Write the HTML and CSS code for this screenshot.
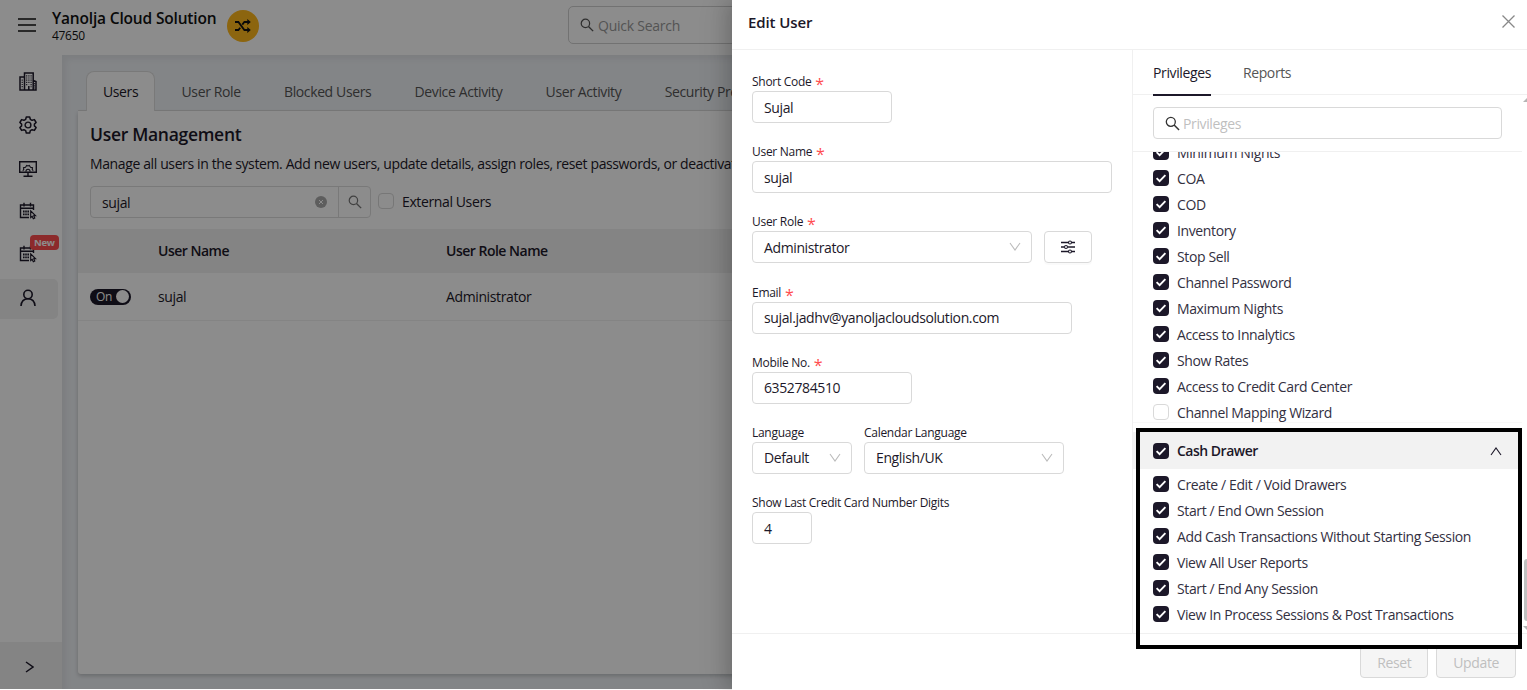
FILE: index.html
```html
<!DOCTYPE html>
<html lang="en">
<head>
    <meta charset="UTF-8">
    <meta name="viewport" content="width=device-width, initial-scale=1.0">
    <title>Yanolja Cloud Solution - Edit User</title>
    <link rel="stylesheet" href="styles.css">
</head>
<body>
    <svg class="sprite" width="0" height="0">
        <symbol id="search" viewBox="0 0 16 16">
            <circle cx="6.2" cy="6.2" r="4.8" fill="none" stroke="currentColor" stroke-width="1.4"/>
            <path d="M9.7 9.7l5.3 5.3" fill="none" stroke="currentColor" stroke-width="1.6"/>
        </symbol>
        <symbol id="tick" viewBox="0 0 16 16">
            <path d="M3.6 8.2l3 3 5.8-6" fill="none" stroke="currentColor" stroke-width="1.9"/>
        </symbol>
        <symbol id="down" viewBox="0 0 12 12">
            <path d="M1 2l5 7 5-7" fill="none" stroke="currentColor" stroke-width="1.1"/>
        </symbol>
        <symbol id="calendar" viewBox="0 0 18 18">
            <path d="M10 15.500H1.500V3h13v5M1.500 6.300h13M5 .8v3.700M11.500 .8v3.700" fill="none" stroke="currentColor" stroke-width="1.400"/>
            <path d="M4 9.500h6M4 12.400h6" fill="none" stroke="currentColor" stroke-width="1.800" stroke-dasharray="1.600 .6"/>
            <path d="M11.700 8.800v6.700l1.500-1.200 1.100 2.500 1.500-.7-1.100-2.300h1.900z" fill="none" stroke="currentColor" stroke-width="1.100"/>
        </symbol>
    </svg>

    <div class="app">
        <header class="header">
            <svg class="menu-icon" viewBox="0 0 18 14"><path d="M0 1h18M0 7h18M0 13h18" stroke="currentColor" stroke-width="1.3"/></svg>
            <div class="property">
                <div class="property-name">Yanolja Cloud Solution</div>
                <div class="property-code">47650</div>
            </div>
            <div class="switch-property">
                <svg width="16" height="14" viewBox="0 0 16 14"><path d="M0 3h3.400l6 8H14M0 11h3.400l1.800-2.300M7.300 5.600L9.400 3H14" fill="none" stroke="currentColor" stroke-width="1.800"/><path d="M12.300 0l3.500 3-3.500 3zM12.300 8l3.500 3-3.500 3z" fill="currentColor"/></svg>
            </div>
            <div class="quick-search">
                <svg width="14" height="14"><use href="#search"/></svg>
                <span>Quick Search</span>
            </div>
        </header>

        <div class="main">
            <nav class="sidebar">
                <a class="nav-item">
                    <svg width="18" height="19" viewBox="0 0 18 19"><path d="M5.500 18V1h8.700v17M5.500 5H1v13h16V9.500l-2.800-1M9.800 18v-4" fill="none" stroke="currentColor" stroke-width="1.500"/><path d="M7.700 3.200v10M9.900 3.200v9M12.100 3.200v12M3.200 7.500v9M15.700 11v6" fill="none" stroke="currentColor" stroke-width="1.100" stroke-dasharray="1.200 1"/></svg>
                </a>
                <a class="nav-item">
                    <svg width="18" height="18" viewBox="0 0 18 18"><path d="M7.300 1h3.400l.6 2.300 1.800 1 2.300-.7 1.700 2.900-1.700 1.600v1.800l1.700 1.600-1.700 2.900-2.300-.7-1.800 1-.6 2.300H7.300l-.6-2.300-1.800-1-2.300.7-1.700-2.900 1.700-1.600V8.100L.9 6.500l1.700-2.900 2.300.7 1.800-1z" fill="none" stroke="currentColor" stroke-width="1.500" stroke-linejoin="round"/><circle cx="9" cy="9" r="2.900" fill="none" stroke="currentColor" stroke-width="1.400"/></svg>
                </a>
                <a class="nav-item monitor">
                    <svg width="18" height="16" viewBox="0 0 18 16"><path d="M.7.7h16.600v10.600H.7zM9 11.500V15M4.500 15.200h9" fill="none" stroke="currentColor" stroke-width="1.400"/><path d="M3.800 9.800l1-1.500-.3-1.700 2-.4L7.700 4.500 9 5l1.300-.5 1.200 1.700 2 .4-.3 1.700 1 1.500M6.900 10.800c0-3.400 4.200-3.400 4.200 0" fill="none" stroke="currentColor" stroke-width="1.100"/></svg>
                </a>
                <a class="nav-item">
                    <svg width="18" height="18"><use href="#calendar"/></svg>
                </a>
                <a class="nav-item">
                    <svg width="18" height="18"><use href="#calendar"/></svg>
                    <span class="badge">New</span>
                </a>
                <a class="nav-item active">
                    <svg width="16" height="18" viewBox="0 0 16 18"><circle cx="8" cy="5.500" r="4.200" fill="none" stroke="currentColor" stroke-width="1.600"/><path d="M1 17c.3-4.500 3-7.300 7-7.300s6.700 2.800 7 7.300" fill="none" stroke="currentColor" stroke-width="1.600"/></svg>
                </a>
                <div class="expand">
                    <svg width="9" height="12" viewBox="0 0 9 12"><path d="M1 1l7 5-7 5" fill="none" stroke="currentColor" stroke-width="1.500"/></svg>
                </div>
            </nav>

            <div class="content">
                <div class="tabs">
                    <div class="tab current">Users</div>
                    <div class="tab">User Role</div>
                    <div class="tab">Blocked Users</div>
                    <div class="tab">Device Activity</div>
                    <div class="tab">User Activity</div>
                    <div class="tab">Security Preferences</div>
                </div>
                <section class="card">
                    <h1>User Management</h1>
                    <p class="description">Manage all users in the system. Add new users, update details, assign roles, reset passwords, or deactivate users.</p>
                    <div class="filters">
                        <div class="user-search">
                            <span class="user-search-text">sujal</span>
                            <svg class="clear" width="12" height="12" viewBox="0 0 12 12"><circle cx="6" cy="6" r="6" fill="#aaa"/><path d="M4 4l4 4M8 4l-4 4" stroke="#fff"/></svg>
                            <span class="search-button"><svg width="14" height="14"><use href="#search"/></svg></span>
                        </div>
                        <span class="checkbox"></span>
                        <span class="filter-label">External Users</span>
                    </div>
                    <div class="row row-head">
                        <div></div>
                        <div>User Name</div>
                        <div>User Role Name</div>
                    </div>
                    <div class="row">
                        <div><span class="switch">On<i></i></span></div>
                        <div>sujal</div>
                        <div>Administrator</div>
                    </div>
                </section>
            </div>
        </div>
    </div>

    <div class="mask"></div>

    <aside class="drawer">
        <div class="drawer-header">
            <h2>Edit User</h2>
            <svg class="close" width="13" height="13" viewBox="0 0 13 13"><path d="M.5.5l12 12M12.500.5l-12 12" stroke="currentColor" stroke-width="1.300"/></svg>
        </div>

        <div class="drawer-body">
            <form class="form">
                <div class="field">
                    <label>Short Code <b>*</b></label>
                    <div class="input w-140">Sujal</div>
                </div>
                <div class="field">
                    <label>User Name <b>*</b></label>
                    <div class="input w-360">sujal</div>
                </div>
                <div class="field">
                    <label>User Role <b>*</b></label>
                    <div class="field-row">
                        <div class="input w-280">Administrator<svg width="12" height="12"><use href="#down"/></svg></div>
                        <div class="settings">
                            <svg width="14" height="14" viewBox="0 0 14 14"><path d="M0 2.500h7.300M10.700 2.500H14M0 7h3.300M6.700 7H14M0 11.500h7.300M10.700 11.500H14" stroke="currentColor" stroke-width="1.300"/><g fill="none" stroke="currentColor" stroke-width="1.100"><circle cx="9" cy="2.500" r="1.500"/><circle cx="5" cy="7" r="1.500"/><circle cx="9" cy="11.500" r="1.500"/></g></svg>
                        </div>
                    </div>
                </div>
                <div class="field">
                    <label>Email <b>*</b></label>
                    <div class="input w-320">sujal.jadhv@yanoljacloudsolution.com</div>
                </div>
                <div class="field">
                    <label>Mobile No. <b>*</b></label>
                    <div class="input w-160">6352784510</div>
                </div>
                <div class="field-row">
                    <div class="field">
                        <label>Language</label>
                        <div class="input w-100">Default<svg width="12" height="12"><use href="#down"/></svg></div>
                    </div>
                    <div class="field">
                        <label>Calendar Language</label>
                        <div class="input w-200">English/UK<svg width="12" height="12"><use href="#down"/></svg></div>
                    </div>
                </div>
                <div class="field">
                    <label>Show Last Credit Card Number Digits</label>
                    <div class="input w-60">4</div>
                </div>
            </form>

            <div class="privileges">
                <div class="sub-tabs">
                    <div class="sub-tab current">Privileges</div>
                    <div class="sub-tab">Reports</div>
                </div>
                <div class="privilege-search">
                    <div class="input">
                        <svg width="15" height="15"><use href="#search"/></svg>
                        <span>Privileges</span>
                    </div>
                </div>
                <div class="privilege-list">
                    <ul class="checks scrolled">
                        <li><span class="checkbox on"><svg><use href="#tick"/></svg></span>Minimum Nights</li>
                        <li><span class="checkbox on"><svg><use href="#tick"/></svg></span>COA</li>
                        <li><span class="checkbox on"><svg><use href="#tick"/></svg></span>COD</li>
                        <li><span class="checkbox on"><svg><use href="#tick"/></svg></span>Inventory</li>
                        <li><span class="checkbox on"><svg><use href="#tick"/></svg></span>Stop Sell</li>
                        <li><span class="checkbox on"><svg><use href="#tick"/></svg></span>Channel Password</li>
                        <li><span class="checkbox on"><svg><use href="#tick"/></svg></span>Maximum Nights</li>
                        <li><span class="checkbox on"><svg><use href="#tick"/></svg></span>Access to Innalytics</li>
                        <li><span class="checkbox on"><svg><use href="#tick"/></svg></span>Show Rates</li>
                        <li><span class="checkbox on"><svg><use href="#tick"/></svg></span>Access to Credit Card Center</li>
                        <li><span class="checkbox"></span>Channel Mapping Wizard</li>
                    </ul>
                    <div class="group-head">
                        <span class="checkbox on"><svg><use href="#tick"/></svg></span>Cash Drawer
                        <svg class="collapse" width="12" height="12"><use href="#down"/></svg>
                    </div>
                    <ul class="checks">
                        <li><span class="checkbox on"><svg><use href="#tick"/></svg></span>Create / Edit / Void Drawers</li>
                        <li><span class="checkbox on"><svg><use href="#tick"/></svg></span>Start / End Own Session</li>
                        <li><span class="checkbox on"><svg><use href="#tick"/></svg></span>Add Cash Transactions Without Starting Session</li>
                        <li><span class="checkbox on"><svg><use href="#tick"/></svg></span>View All User Reports</li>
                        <li><span class="checkbox on"><svg><use href="#tick"/></svg></span>Start / End Any Session</li>
                        <li><span class="checkbox on"><svg><use href="#tick"/></svg></span>View In Process Sessions &amp; Post Transactions</li>
                    </ul>
                </div>
                <div class="scrollbar"></div>
            </div>
        </div>

        <div class="drawer-footer">
            <div class="button">Reset</div>
            <div class="button">Update</div>
        </div>
        <div class="highlight"></div>
    </aside>
</body>
</html>
```
FILE: styles.css
```css
* {
    box-sizing: border-box;
}

body {
    margin: 0;
    height: 690px;
    overflow: hidden;
    position: relative;
    font-family: 'Segoe UI', 'Open Sans', 'Noto Sans', sans-serif;
    font-size: 14px;
    letter-spacing: -0.38px;
    color: #1c1829;
    background: #fff;
}

svg {
    flex: none;
    display: block;
}

.sprite {
    position: absolute;
}

.app {
    height: 689px;
    overflow: hidden;
}

.header {
    height: 55px;
    display: flex;
    align-items: flex-start;
    padding-left: 18px;
    background: #fff;
    color: #111;
}

.menu-icon {
    width: 18px;
    height: 14px;
    margin-top: 18px;
}

.property {
    width: 175px;
    margin-left: 16px;
    padding-top: 8px;
    white-space: nowrap;
}

.property-name {
    font-size: 15.5px;
    line-height: 21px;
    font-weight: 600;
    letter-spacing: -0.17px;
}

.property-code {
    font-size: 12px;
    line-height: 14px;
    letter-spacing: -0.3px;
}

.switch-property {
    width: 32px;
    height: 32px;
    margin-top: 10px;
    border-radius: 50%;
    display: flex;
    align-items: center;
    justify-content: center;
    background: #ffb81c;
}

.quick-search {
    width: 400px;
    height: 38px;
    margin: 6px 0 0 309px;
    border: 1px solid #d0d0d0;
    border-radius: 5px;
    display: flex;
    align-items: center;
    gap: 4px;
    padding-left: 11px;
    color: #999;
    letter-spacing: -0.25px;
}

.quick-search svg {
    color: #555;
}

.main {
    display: flex;
    height: 634px;
}

.sidebar {
    width: 62px;
    display: flex;
    flex-direction: column;
    padding-top: 6px;
    background: #fff;
}

.nav-item {
    position: relative;
    width: 58px;
    height: 40px;
    margin-bottom: 3.5px;
    border-radius: 0 5px 5px 0;
    display: flex;
    align-items: center;
    justify-content: center;
    padding: 0 2px 2px 0;
}

.nav-item:nth-child(-n+2) {
    padding-bottom: 0;
}

.nav-item.monitor {
    padding: 1px 2px 0 0;
}

.nav-item.active {
    background: #f0f0f0;
}

.badge {
    position: absolute;
    left: 30px;
    top: 0;
    height: 15px;
    padding: 0 4px;
    border-radius: 4px;
    background: #ff4d4f;
    color: #fff;
    font-size: 9.5px;
    font-weight: 700;
    line-height: 15px;
    letter-spacing: -0.3px;
}

.expand {
    height: 47px;
    margin-top: auto;
    padding: 2px 0 0 25px;
    display: flex;
    align-items: center;
    background: #f0f0f0;
}

.content {
    flex: 1;
    padding: 16px 0 0 16px;
    background: #eff2f6;
    box-shadow: inset 4px 4px 6px rgba(0, 0, 0, 0.06);
}

.tabs {
    height: 40px;
    display: flex;
    padding-left: 8px;
    border-bottom: 1px solid #ddd;
    white-space: nowrap;
}

.tab {
    height: 40px;
    padding: 0 16px;
    margin-right: 9.3px;
    border: 1px solid transparent;
    line-height: 40px;
    color: #555;
}

.tab.current {
    border-color: #ddd;
    border-bottom: 0;
    border-radius: 8px 8px 0 0;
    background: #fff;
    color: #1c1829;
}

.card {
    height: 563px;
    background: #fff;
    border-radius: 0 0 0 3px;
    box-shadow: 0 2px 4px rgba(0, 0, 0, 0.2);
}

h1 {
    margin: 0;
    padding: 9px 12px 0;
    font-size: 17.5px;
    line-height: 28px;
    font-weight: 600;
    letter-spacing: -0.3px;
}

.description {
    margin: 0;
    padding: 6px 12px 0;
    line-height: 20px;
    white-space: nowrap;
}

.filters {
    display: flex;
    align-items: center;
    height: 32px;
    margin: 12px 12px 11px;
}

.user-search {
    width: 281px;
    height: 32px;
    margin-right: 7px;
    border: 1px solid #ddd;
    border-radius: 4px;
    display: flex;
    align-items: center;
}

.user-search-text {
    flex: 1;
    padding-left: 11px;
}

.clear {
    margin-right: 11px;
}

.search-button {
    width: 32px;
    height: 30px;
    border-left: 1px solid #ddd;
    display: flex;
    align-items: center;
    justify-content: center;
    color: #777;
}

.filter-label {
    margin-left: 8px;
    padding-bottom: 2px;
}

.filters > .checkbox {
    margin-bottom: 2px;
}

.checkbox {
    width: 16px;
    height: 16px;
    flex: none;
    border: 1px solid #d9d9d9;
    border-radius: 4px;
    background: #fff;
}

.checkbox.on {
    border: 0;
    background: #1c1829;
    color: #fff;
}

.checkbox svg {
    width: 16px;
    height: 16px;
}

.row {
    display: grid;
    grid-template-columns: 68px 288px 1fr;
    align-items: center;
    height: 48px;
    padding-left: 12px;
    border-bottom: 1px solid #f0f0f0;
}

.row-head {
    height: 44px;
    background: #f0f0f0;
    font-weight: 600;
    letter-spacing: -0.5px;
}

.switch {
    width: 41px;
    height: 16px;
    padding: 0 2px 0 6px;
    border-radius: 8px;
    display: flex;
    align-items: center;
    justify-content: space-between;
    background: #1c1829;
    color: #fff;
    font-size: 12px;
}

.switch i {
    width: 13px;
    height: 13px;
    border-radius: 50%;
    background: #fff;
}

.mask {
    position: absolute;
    inset: 0 0 1px;
    background: rgba(0, 0, 0, 0.45);
}

.drawer {
    position: absolute;
    top: 0;
    right: 0;
    width: 795px;
    height: 690px;
    display: flex;
    flex-direction: column;
    background: #fff;
    box-shadow: -6px 0 16px rgba(0, 0, 0, 0.14), -9px 0 28px rgba(0, 0, 0, 0.08);
}

.drawer-header {
    height: 50px;
    padding: 0 12px 5px 16px;
    display: flex;
    align-items: center;
    justify-content: space-between;
    border-bottom: 1px solid #f0f0f0;
}

h2 {
    margin: 0;
    font-size: 15px;
    font-weight: 600;
    letter-spacing: -0.1px;
}

.close {
    margin-bottom: 2px;
    color: #888;
}

.drawer-body {
    height: 584px;
    display: flex;
    border-bottom: 1px solid #f0f0f0;
}

.form {
    width: 400px;
    padding: 23px 0 0 20px;
}

.field {
    height: 70.2px;
}

.field-row {
    display: flex;
    gap: 12px;
}

label {
    display: block;
    height: 18px;
    font-size: 12px;
    line-height: 18px;
    letter-spacing: -0.28px;
    white-space: nowrap;
}

label b {
    margin-left: 1px;
    color: #ff4d4f;
    font-size: 16px;
    line-height: 0;
    font-weight: 400;
    vertical-align: -4px;
}

.input {
    height: 32px;
    padding: 0 10px 0 11px;
    border: 1px solid #d9d9d9;
    border-radius: 4px;
    display: flex;
    align-items: center;
    justify-content: space-between;
}

.input svg {
    color: #bbb;
}

.w-60 { width: 60px; }
.w-100 { width: 100px; }
.w-140 { width: 140px; }
.w-160 { width: 160px; }
.w-200 { width: 200px; }
.w-280 { width: 280px; }
.w-320 { width: 320px; }
.w-360 { width: 360px; }

.settings {
    width: 48px;
    height: 32px;
    border: 1px solid #d9d9d9;
    border-radius: 4px;
    display: flex;
    align-items: center;
    justify-content: center;
    box-shadow: 0 2px 0 rgba(0, 0, 0, 0.02);
}

.privileges {
    position: relative;
    width: 395px;
    border-left: 1px solid #f0f0f0;
}

.sub-tabs {
    height: 45px;
    padding-left: 20px;
    display: flex;
    gap: 32px;
    border-bottom: 1px solid #f0f0f0;
}

.sub-tab {
    height: 46px;
    line-height: 46px;
    color: #555;
}

.sub-tab.current {
    color: #1c1829;
    border-bottom: 2px solid #1c1829;
}

.privilege-search {
    width: 389px;
    height: 57px;
    padding: 12px 20px 0;
    border-bottom: 1px solid #f0f0f0;
}

.privilege-search .input {
    justify-content: flex-start;
    gap: 3px;
    color: #bfbfbf;
}

.privilege-search .input svg {
    color: #333;
}

.privilege-list {
    height: 481px;
    overflow: hidden;
}

.checks {
    margin: 0;
    padding: 2px 0 0 20px;
    list-style: none;
}

.checks.scrolled {
    width: 389px;
    height: 284px;
    margin: -13px 0 9px;
    padding-top: 0;
    border-bottom: 1px solid #f8f8f8;
}

.checks li {
    display: flex;
    align-items: center;
    gap: 8px;
    height: 26px;
    color: #33303f;
    white-space: nowrap;
}

.group-head {
    height: 37px;
    width: 389px;
    padding: 0 20px;
    display: flex;
    align-items: center;
    gap: 8px;
    background: #f2f2f2;
    font-weight: 600;
    letter-spacing: -0.5px;
}

.collapse {
    margin-left: auto;
    transform: rotate(180deg);
}

.scrollbar {
    position: absolute;
    right: 0;
    top: 509px;
    width: 3px;
    height: 62px;
    border-radius: 3px 0 0 3px;
    background: #c1c1c1;
}

.scrollbar::before,
.scrollbar::after {
    content: '';
    position: absolute;
    right: 0;
    top: -461px;
    border: 4px solid transparent;
    border-right: 0;
    border-left-width: 4px;
    border-top: 0;
    border-bottom-color: #b5b5b5;
}

.scrollbar::after {
    top: 67px;
    border-top: 4px solid #b5b5b5;
    border-bottom: 0;
}

.drawer-footer {
    flex: 1;
    display: flex;
    justify-content: flex-end;
    gap: 8px;
    padding: 12px 11px 0 0;
}

.button {
    height: 32px;
    padding: 0 16px;
    border: 1px solid #d9d9d9;
    border-radius: 4px;
    line-height: 31px;
    background: #f5f5f5;
    color: #bfbfbf;
}

.highlight {
    position: absolute;
    left: 404px;
    top: 428px;
    width: 386px;
    height: 221px;
    border: 4px solid #000;
}
```
